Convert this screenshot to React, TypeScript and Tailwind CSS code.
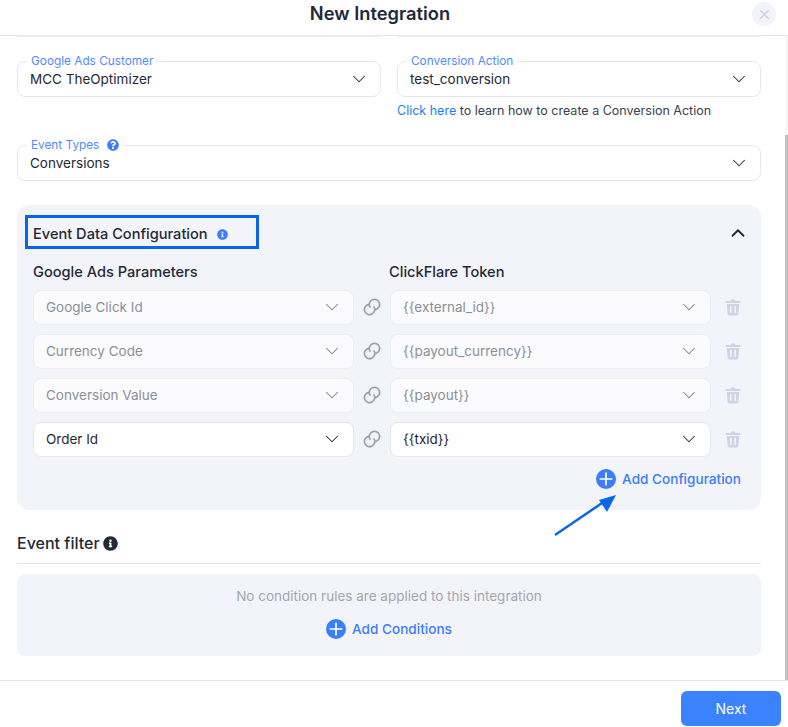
import { FC, ReactNode } from 'react';
import { ChevronDown, ChevronUp, Plus, X } from 'lucide-react';
import { FaInfoCircle, FaQuestionCircle } from 'react-icons/fa';

const TrashIcon: FC = () => (
  <svg width="16" height="17" viewBox="0 0 16 17" fill="#cfd3e3">
    <path d="M5.8 1.2c0-.5.4-.8.9-.8h2.6c.5 0 .9.3.9.8v.9h4.3c.5 0 .8.4.8.8v1H.7v-1c0-.4.3-.8.8-.8h4.3z" />
    <path
      fillRule="evenodd"
      d="M1.8 5h12.4l-.8 9.8c-.1 1-.8 1.7-1.8 1.7H4.4c-1 0-1.7-.7-1.8-1.7L1.8 5zM5 7v7h1.6V7H5zm4.4 0v7H11V7H9.4z"
    />
  </svg>
);

const LinkIcon: FC = () => (
  <svg width="18" height="18" viewBox="0 0 16 16" fill="none" stroke="#9aa1a9" strokeWidth="1.5" strokeLinecap="round">
    <path d="M6.2 8.1A4.6 4.6 0 1 1 11 10.3" />
    <path d="M9.8 7.9A4.6 4.6 0 1 1 5 5.7" />
  </svg>
);

const AddButton: FC<{ label: string }> = ({ label }) => (
  <button className="flex items-center gap-[6px] text-[13.6px] font-medium text-[#3b7dfc]">
    <span className="flex size-5 items-center justify-center rounded-full bg-[#3b7dfc]">
      <Plus size={20} strokeWidth={2} color="#fff" />
    </span>
    {label}
  </button>
);

const Field: FC<{ label: ReactNode; value: string }> = ({ label, value }) => (
  <div className="relative flex h-9 items-center justify-between rounded-lg border border-[#e5e7eb] bg-white pr-[10px] pl-3">
    <span className="absolute -top-[7px] left-[9px] flex h-3 items-center gap-[8px] bg-white px-[4px] text-[11.8px] leading-3 text-[#4f8bff]">
      {label}
    </span>
    <span className="text-[13.5px] text-[#1f2937]">{value}</span>
    <ChevronDown size={22} strokeWidth={1.1} color="#1f2937" />
  </div>
);

const SmallSelect: FC<{ value: string; active?: boolean }> = ({ value, active }) => (
  <div
    className={
      active
        ? 'flex h-[35px] flex-1 items-center justify-between rounded-lg border border-[#e5e7eb] bg-white pr-[10px] pl-3 text-[13.5px] text-[#1f2937]'
        : 'flex h-[35px] flex-1 items-center justify-between rounded-lg border border-[#eceef3] bg-[#fbfbfd] pr-[10px] pl-3 text-[13.5px] text-[#8b8f99]'
    }
  >
    {value}
    <ChevronDown size={22} strokeWidth={1.1} color={active ? '#1f2937' : '#7c808b'} />
  </div>
);

const rows = [
  { param: 'Google Click Id', token: '{{external_id}}', active: false },
  { param: 'Currency Code', token: '{{payout_currency}}', active: false },
  { param: 'Conversion Value', token: '{{payout}}', active: false },
  { param: 'Order Id', token: '{{txid}}', active: true },
];

export default function App() {
  return (
    <div
      className="relative flex h-[727px] w-[788px] flex-col overflow-hidden bg-white text-[#1f2937]"
      style={{ fontFamily: 'Inter, "Noto Sans", sans-serif' }}
    >
      <header className="relative flex h-9 shrink-0 items-center justify-center border-b border-[#e5e7eb] pr-[28px] pb-[9px]">
        <h1 className="text-[18.3px] leading-6 font-semibold text-[#1e293b]">New Integration</h1>
        <button className="absolute top-[2px] right-[12px] flex size-6 items-center justify-center rounded-full bg-[#f3f4f9]">
          <X size={15} strokeWidth={2.5} color="#cdd2e4" />
        </button>
      </header>

      <main className="flex flex-1 flex-col pr-[27px] pl-[17px]">
        <div className="grid h-px grid-cols-2 gap-4">
          <div className="h-px rounded-b bg-[#eceef1]" />
          <div className="h-px rounded-b bg-[#eceef1]" />
        </div>

        <div className="mt-6 grid grid-cols-2 gap-4">
          <Field label="Google Ads Customer" value="MCC TheOptimizer" />
          <div>
            <Field label="Conversion Action" value="test_conversion" />
            <p className="mt-[5px] text-[12.5px] leading-[18px] text-[#374151]">
              <span className="text-[#1a7ff5]">Click here</span> to learn how to create a Conversion Action
            </p>
          </div>
        </div>

        <div className="mt-[25px]">
          <Field
            label={
              <>
                Event Types
                <FaQuestionCircle size={12} color="#3b7dfc" />
              </>
            }
            value="Conversions"
          />
        </div>

        <section className="mt-6 flex h-[305px] flex-col rounded-xl bg-[#f3f4f9] pr-5 pl-4">
          <div className="flex items-start justify-between pt-[10px]">
            <div className="-ml-2 flex h-[34px] w-[234px] items-center gap-[9px] border-[3px] border-[#0a66e8] pt-[5px] pl-[5px]">
              <h2 className="text-[14.6px] font-medium text-[#1f2937]">Event Data Configuration</h2>
              <FaInfoCircle size={11} color="#3b7dfc" />
            </div>
            <ChevronUp className="mt-[7px] mr-[-8px]" size={22} strokeWidth={2} color="#1f2937" />
          </div>

          <div className="mt-[13px] flex text-[14.6px] font-medium text-[#1f2937]">
            <span className="w-[356px]">Google Ads Parameters</span>
            <span>ClickFlare Token</span>
          </div>

          <div className="mt-[6px] flex flex-col gap-[9px]">
            {rows.map(row => (
              <div key={row.param} className="flex items-center">
                <SmallSelect value={row.param} active={row.active} />
                <span className="flex w-9 justify-center">
                  <LinkIcon />
                </span>
                <SmallSelect value={row.token} active={row.active} />
                <span className="flex w-[30px] justify-end">
                  <TrashIcon />
                </span>
              </div>
            ))}
          </div>

          <div className="mt-[12px] flex justify-end">
            <AddButton label="Add Configuration" />
          </div>
        </section>

        <div className="mt-[23px] flex h-[31px] items-start gap-[3px] border-b border-[#e5e7eb] text-[16px] leading-5 font-medium text-[#1f2937]">
          Event filter
          <FaInfoCircle size={15} color="#1f2937" className="mt-[3px]" />
        </div>

        <section className="mt-[10px] flex h-[82px] flex-col items-center rounded-lg bg-[#f3f4f9] pt-[13px]">
          <p className="text-[13.5px] leading-[18px] text-[#a3a6ae]">No condition rules are applied to this integration</p>
          <div className="mt-[14px]">
            <AddButton label="Add Conditions" />
          </div>
        </section>
      </main>

      <footer className="flex h-[47px] shrink-0 items-start justify-end border-t border-[#e5e7eb] pt-[10px] pr-[7px]">
        <button className="h-[35px] w-[100px] rounded-md bg-[#3b82ff] text-sm font-normal text-white">Next</button>
      </footer>

      {/* scrollbar */}
      <div className="absolute top-9 right-0 h-[644px] w-[3px] bg-[#f7f7f7]">
        <div className="mt-[99px] h-[545px] bg-[#c1c1c1]" />
      </div>

      {/* annotation arrow */}
      <svg className="absolute top-[490px] left-[550px]" width="70" height="50" viewBox="0 0 70 50" fill="none">
        <path d="M5 45 L55 11" stroke="#0a66e8" strokeWidth="2.5" />
        <path d="M66 5 L49 10 L57 22 Z" fill="#0a66e8" />
      </svg>
    </div>
  );
}
